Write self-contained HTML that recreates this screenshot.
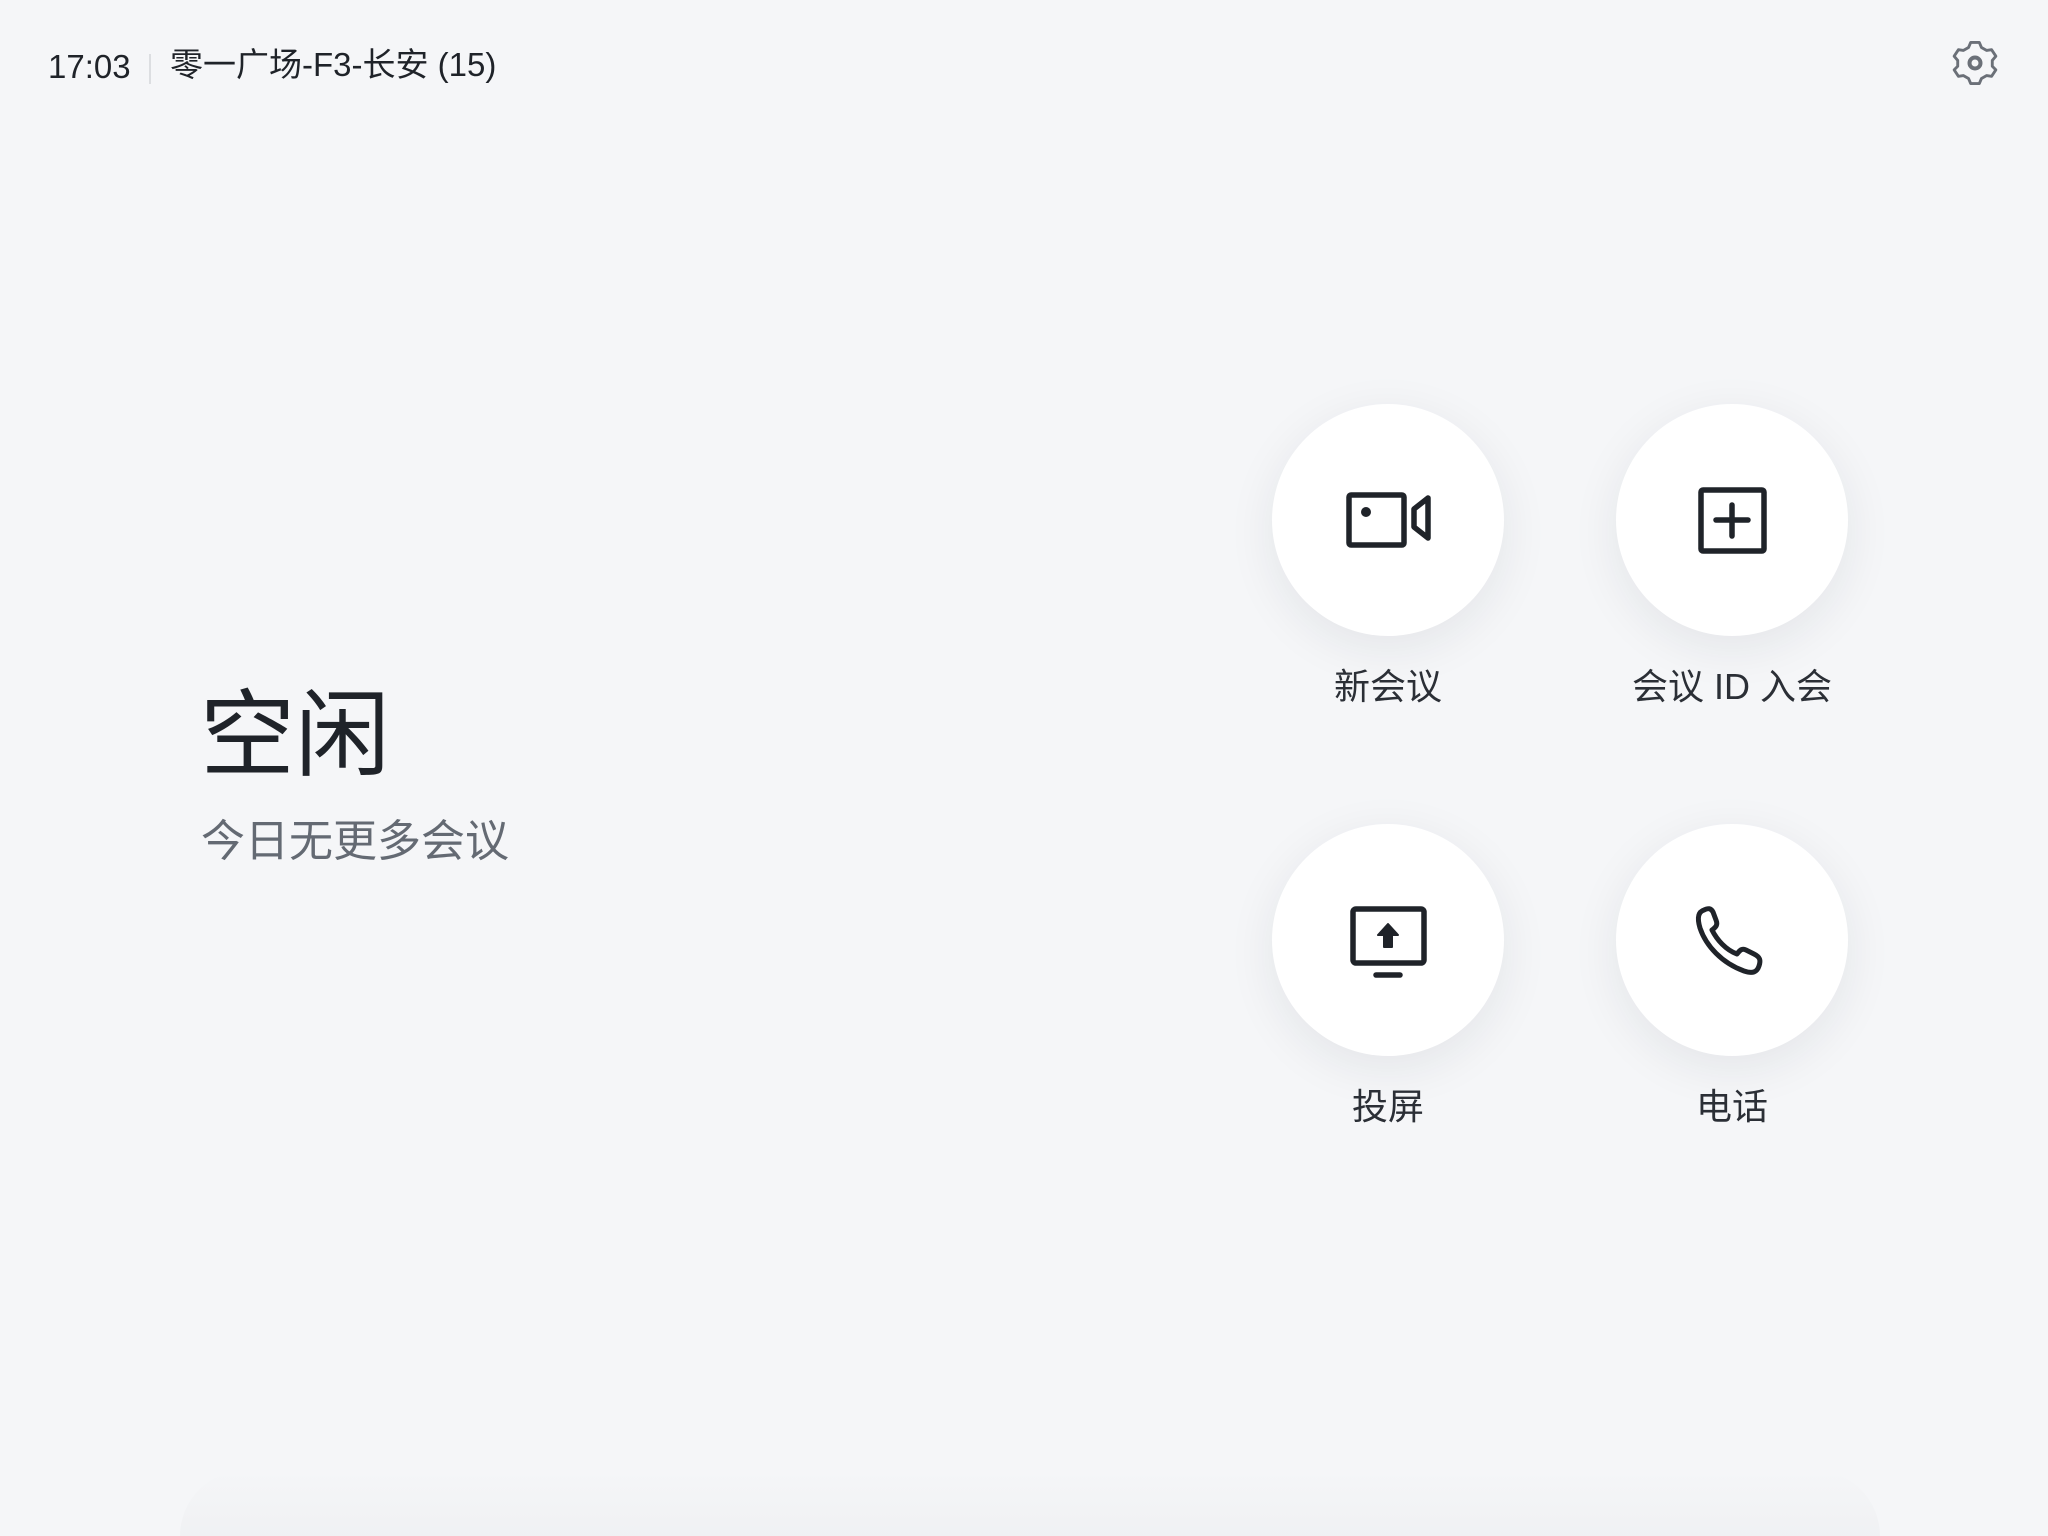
<!DOCTYPE html>
<html><head><meta charset="utf-8"><style>
html,body{margin:0;padding:0;width:2048px;height:1536px;overflow:hidden}
body{background:#f5f6f8;position:relative;font-family:"Liberation Sans","Noto Sans CJK SC",sans-serif;color:#1f2329}
.t{position:absolute;white-space:nowrap;line-height:1}
.c{position:absolute;width:232px;height:232px;border-radius:50%;background:#fff;box-shadow:0 12px 48px rgba(30,35,45,0.08)}
.lb{position:absolute;width:400px;text-align:center;font-size:36px;color:#2b2f36;line-height:1}
svg{position:absolute;left:0;top:0}
</style></head><body>
<div style="position:absolute;left:180px;top:1470px;width:1700px;height:66px;border-radius:100px 100px 0 0;background:linear-gradient(rgba(30,35,45,0),rgba(30,35,45,0.025))"></div>
<div class="t" style="left:48px;top:50px;font-size:33px;">17:03</div>
<div style="position:absolute;left:149px;top:54px;width:2px;height:30px;background:#dcdee1"></div>
<div class="t" style="left:170px;top:48px;font-size:33px;">零一广场-F3-长安 (15)</div>
<div class="t" style="left:200px;top:689px;font-size:95px;color:#1f2329">空闲</div>
<div class="t" style="left:201px;top:820px;font-size:44px;color:#646a73">今日无更多会议</div>
<div class="c" style="left:1272px;top:404px"></div>
<div class="c" style="left:1616px;top:404px"></div>
<div class="c" style="left:1272px;top:824px"></div>
<div class="c" style="left:1616px;top:824px"></div>
<div class="lb" style="left:1188px;top:669px">新会议</div>
<div class="lb" style="left:1532px;top:669px">会议 ID 入会</div>
<div class="lb" style="left:1188px;top:1089px">投屏</div>
<div class="lb" style="left:1532px;top:1089px">电话</div>
<svg width="2048" height="1536" viewBox="0 0 2048 1536" fill="none" stroke="#1f2329" stroke-width="5.5" stroke-linejoin="round" stroke-linecap="round">
<rect x="1349" y="495" width="55" height="50" rx="2"/>
<circle cx="1366" cy="512" r="5" fill="#1f2329" stroke="none"/>
<path d="M1414 509 L1428 498 L1428 538 L1414 527 Z"/>
<rect x="1701" y="490" width="63" height="61" rx="2"/>
<path d="M1732 505 V536 M1716 520 H1748"/>
<rect x="1353" y="909" width="71" height="54" rx="3"/>
<path d="M1388 924 L1378 935 H1384 V947 H1392 V935 H1398 Z" fill="#1f2329" stroke-width="2"/>
<path d="M1376 975 H1400"/>
<path d="M1704 910 C1698 912 1697 918 1700 928 C1706 946 1722 963 1744 971 C1753 974 1757 972 1759 966 C1761 960 1760 957 1754 954 L1746 950 C1742 948 1740 950 1737 954 C1726 950 1717 940 1712 930 C1716 927 1718 925 1716 920 L1713 912 C1711 908 1708 908 1704 910 Z" stroke-width="5"/>
</svg>
<svg width="2048" height="1536" viewBox="0 0 2048 1536" fill="none" stroke="#6b7078" stroke-width="4" stroke-linejoin="round">
<path d="M1969 44 H1981 L1984 51 L1991 55 L1998 54 L2004 63 L1999 69 L1999 77 L2004 82 L1998 91 L1991 90 L1984 94 L1981 101 H1969 L1966 94 L1959 90 L1952 91 L1946 82 L1951 77 L1951 69 L1946 63 L1952 54 L1959 55 L1966 51 Z" transform="translate(1975 63) scale(0.72) translate(-1975 -72.5)"/>
<circle cx="1975" cy="63" r="5.5"/>
</svg>
</body></html>
